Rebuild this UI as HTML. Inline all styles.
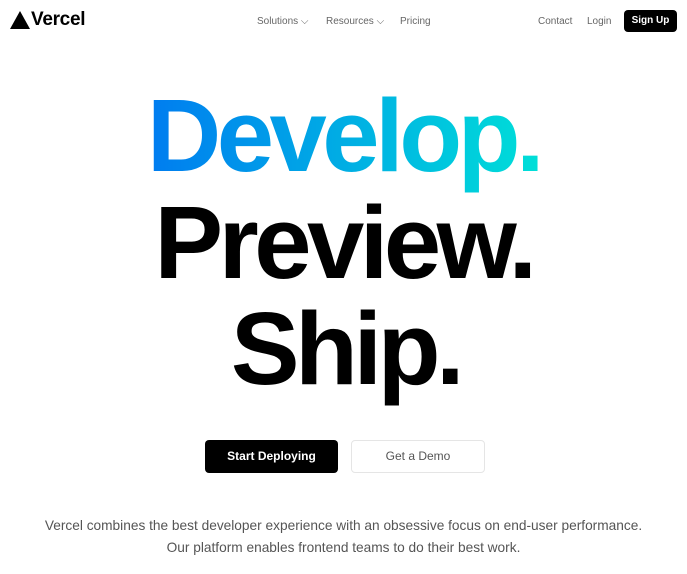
<!DOCTYPE html>
<html><head><meta charset="utf-8"><style>
*{margin:0;padding:0;box-sizing:border-box}
body{width:687px;height:574px;background:#fff;font-family:"Liberation Sans",sans-serif;position:relative;overflow:hidden}
.a{position:absolute}
.nav{font-size:10px;color:#666;top:16px}
.h{position:absolute;left:0;width:687px;text-align:center;font-weight:bold;font-size:103px;letter-spacing:-4.5px;line-height:1;white-space:nowrap}
.g{background:linear-gradient(90deg,#007cf0,#00dfd8);-webkit-background-clip:text;background-clip:text;color:transparent}
</style></head><body>
<svg class="a" style="left:10px;top:11px" width="20" height="18" viewBox="0 0 20 18"><polygon points="10,0 20,18 0,18" fill="#000"/></svg>
<div class="a" style="left:31px;top:9px;font-size:19px;font-weight:bold;letter-spacing:-0.3px">Vercel</div>
<div class="a nav" style="left:257px">Solutions ⌵</div>
<div class="a nav" style="left:326px">Resources ⌵</div>
<div class="a nav" style="left:400px">Pricing</div>
<div class="a nav" style="left:538px">Contact</div>
<div class="a nav" style="left:587px">Login</div>
<div class="a" style="left:624px;top:10px;width:53px;height:22px;background:#000;border-radius:4px;color:#fff;font-size:10px;font-weight:bold;text-align:center;line-height:22px">Sign Up</div>
<div class="h" style="top:84px"><span class="g">Develop.</span></div>
<div class="h" style="top:191px">Preview.</div>
<div class="h" style="top:297px;left:2px">Ship.</div>
<div class="a" style="left:205px;top:440px;width:133px;height:33px;background:#000;border-radius:4px;color:#fff;font-size:12px;font-weight:bold;text-align:center;line-height:33px">Start Deploying</div>
<div class="a" style="left:351px;top:440px;width:134px;height:33px;border:1px solid #e5e5e5;border-radius:4px;color:#555;font-size:12px;text-align:center;line-height:31px">Get a Demo</div>
<div class="a" style="left:0;top:515px;width:687px;text-align:center;font-size:13.7px;color:#555;line-height:22px">Vercel combines the best developer experience with an obsessive focus on end-user performance.<br>Our platform enables frontend teams to do their best work.</div>
</body></html>
